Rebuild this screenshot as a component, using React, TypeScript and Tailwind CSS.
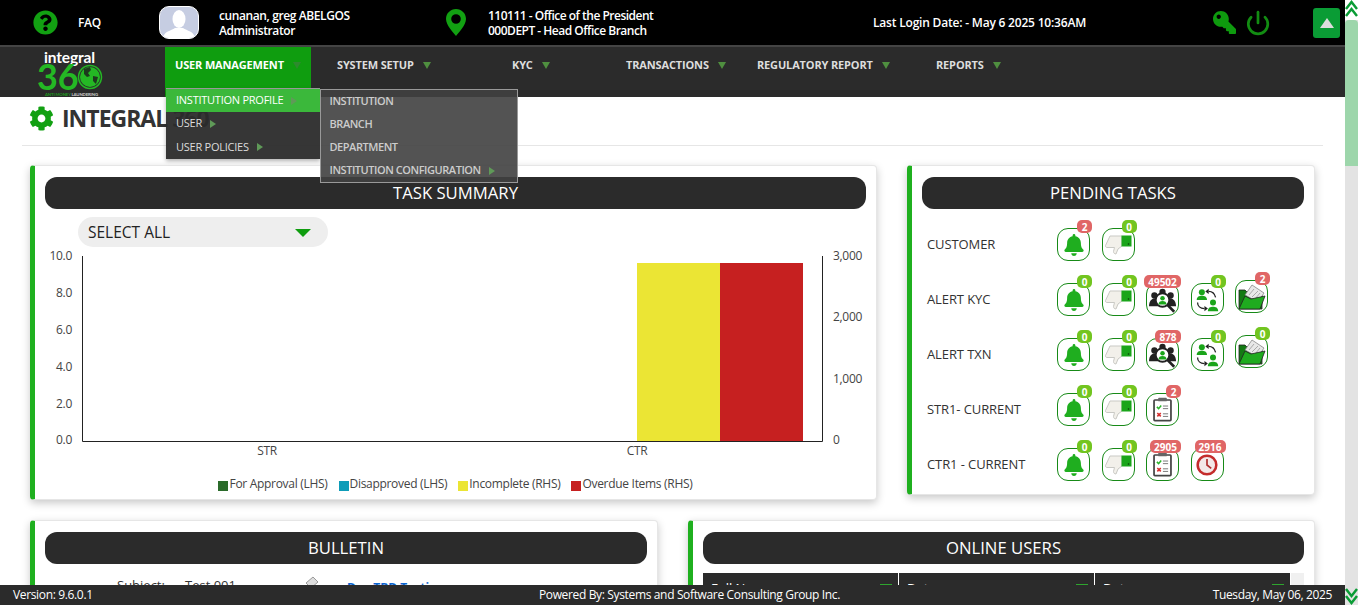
import { ReactNode } from 'react';
import { FaBell, FaCog, FaKey, FaQuestionCircle } from 'react-icons/fa';
import { Power } from 'lucide-react';

const NAV = [
  { label: 'SYSTEM SETUP', width: 'w-[175px]' },
  { label: 'KYC', width: 'w-[114px]' },
  { label: 'TRANSACTIONS', width: 'w-[131px]' },
  { label: 'REGULATORY REPORT', width: 'w-[179px]' },
  { label: 'REPORTS', width: 'w-[100px]' },
];

function Caret({ className = '' }: { className?: string }) {
  return <span className={`inline-block h-0 w-0 border-x-[4.5px] border-t-[7px] border-x-transparent ${className}`} />;
}

function SideCaret() {
  return <span className="ml-2 inline-block h-0 w-0 border-y-[4.5px] border-l-[6px] border-y-transparent border-l-[#5f9a58]" />;
}

function Logo() {
  return (
    <svg width="72" height="49" viewBox="0 0 72 49" className="font-['Lato',sans-serif]">
      <text x="9" y="15" fill="#fff" fontSize="15.500">integral</text>
      <text x="2" y="42" fill="#24b824" fontSize="36">36</text>
      <circle cx="55" cy="29" r="11.500" fill="none" stroke="#24b824" strokeWidth="1.500" />
      <circle cx="55" cy="29" r="10" fill="#24b824" />
      <path d="M49 21l6-2 1 3-3 3 2 3-3 1-3-3zM58 28l5 1-2 7-3-3z" fill="#1d3a1d" />
      <text x="10" y="47.500" fontSize="4.300" fontWeight="700">
        <tspan fill="#1f9a1f">ANTI MONEY </tspan>
        <tspan fill="#ccc">LAUNDERING</tspan>
      </text>
    </svg>
  );
}

function Pin() {
  return (
    <svg width="20" height="27" viewBox="0 0 20 27">
      <path d="M10 0C4.400 0 0 4.400 0 10c0 6.200 7.300 13.600 10 17 2.700-3.400 10-10.800 10-17C20 4.400 15.600 0 10 0zm0 14.800a4.800 4.800 0 1 1 0-9.600 4.800 4.800 0 0 1 0 9.600z" fill="#12a012" />
    </svg>
  );
}

function Avatar() {
  return (
    <div className="h-[33px] w-[40px] overflow-hidden rounded-[10px] border border-white bg-[#c6cde2]">
      <svg width="38" height="31" viewBox="0 0 38 31">
        <ellipse cx="19" cy="12" rx="6.500" ry="9" fill="#fff" />
        <path d="M3 31c1-7 8-7 12-10h8c4 3 11 3 12 10z" fill="#fff" />
      </svg>
    </div>
  );
}

function ThumbDown() {
  return (
    <svg width="27" height="20" viewBox="0 0 27 20">
      <path d="M5 1h12v10l-4 3-2 5c-1.500 0-2.500-1-2.500-2.500l1-4H2c-1 0-1.800-.8-1.500-2z" fill="#f2f0ea" stroke="#c9c9c4" strokeWidth="1" />
      <rect x="16.500" y="0.500" width="10" height="11" fill="#1aa51a" />
      <circle cx="23.500" cy="9" r="0.800" fill="#0a3a0a" />
    </svg>
  );
}

function Investigate() {
  return (
    <svg width="27" height="26" viewBox="0 0 30 28">
      <circle cx="6" cy="9" r="3.500" fill="#222" />
      <circle cx="24" cy="9" r="3.500" fill="#222" />
      <circle cx="15" cy="5" r="3.500" fill="#222" />
      <path d="M0 21c0-6 3-9 7-9h16c4 0 7 3 7 9z" fill="#222" />
      <circle cx="15" cy="14" r="7.500" fill="#fff" stroke="#222" strokeWidth="2" />
      <circle cx="15" cy="12" r="2.500" fill="#1aa51a" />
      <path d="M10.500 19c0-3 2-4 4.500-4s4.500 1 4.500 4z" fill="#1aa51a" />
      <path d="M21 20l7 7" stroke="#222" strokeWidth="3" />
    </svg>
  );
}

function Reassign() {
  return (
    <svg width="24" height="24" viewBox="0 0 28 28">
      <circle cx="8" cy="5" r="3.500" fill="#1aa51a" />
      <path d="M2 14c0-4 3-5 6-5s6 1 6 5z" fill="#1aa51a" />
      <circle cx="21" cy="17" r="3.500" fill="#1aa51a" />
      <path d="M15 27c0-4 3-5 6-5s6 1 6 5z" fill="#1aa51a" />
      <path d="M16 4c4 0 7 3 8 7" fill="none" stroke="#222" strokeWidth="1.500" />
      <path d="M16 1v6l-4-3z" fill="#222" />
      <path d="M3 17c0 4 3 7 8 7" fill="none" stroke="#222" strokeWidth="1.500" />
      <path d="M11 21v6l4-3z" fill="#222" />
    </svg>
  );
}

function OpenFolder() {
  return (
    <svg width="28" height="26" viewBox="0 0 28 26">
      <path d="M1 6h6l2 2h15v17H1z" fill="#147a14" stroke="#222" strokeWidth="0.800" />
      <path d="M7 11L14 1l12 8-6 9z" fill="#e8e8e8" stroke="#888" strokeWidth="0.800" />
      <path d="M11 11l5-6M14 13l6-6M17 15l5-6" stroke="#999" strokeWidth="0.800" />
      <path d="M1 25l6-13 6 3 14-3-5 13z" fill="#1fab1f" stroke="#222" strokeWidth="0.800" />
    </svg>
  );
}

function Checklist() {
  return (
    <svg width="19" height="25" viewBox="0 0 22 28">
      <rect x="1.200" y="3" width="19.600" height="24" rx="1" fill="#fff" stroke="#444" strokeWidth="2" />
      <rect x="6" y="0.500" width="10" height="4" rx="1" fill="#666" />
      <path d="M4.500 11l2 2 3-3.500" fill="none" stroke="#2ab52a" strokeWidth="1.800" />
      <path d="M11.500 10h6M11.500 13h6M11.500 19h6M11.500 22h6" stroke="#666" strokeWidth="1" />
      <path d="M5 18l4 4M9 18l-4 4" stroke="#d63030" strokeWidth="1.800" />
    </svg>
  );
}

function Clock() {
  return (
    <svg width="22" height="22" viewBox="0 0 26 26">
      <circle cx="13" cy="13" r="11" fill="#f3e9e9" stroke="#c42c2c" strokeWidth="3" />
      <path d="M13 6v7l5 4" fill="none" stroke="#b03030" strokeWidth="2" />
    </svg>
  );
}

function TaskIcon({ count, hot, raised, wide, children }: { count: string; hot?: boolean; raised?: boolean; wide?: string; children: ReactNode }) {
  return (
    <div className={`relative flex h-[33px] w-[33px] items-center justify-center rounded-[11px] border-[1.5px] border-[#178a17] bg-white ${raised ? 'mb-[6px]' : ''}`}>
      {children}
      <span
        className={`absolute -right-[3px] -top-[9px] flex h-[13px] items-center justify-center rounded-[5px] text-[10px] font-bold leading-none text-white ${wide ?? 'w-[15px]'} ${hot ? 'bg-[#e06666]' : 'bg-[#72c520]'}`}
      >
        {count}
      </span>
    </div>
  );
}

const bell = <FaBell className="text-[#1fae1f]" size={22} />;

function Row({ label, children }: { label: string; children: ReactNode }) {
  return (
    <div className="flex h-[55px] items-center">
      <div className="w-[130px] text-[13px] tracking-[-0.1px] text-[#333]">{label}</div>
      <div className="flex items-center gap-[11.5px]">{children}</div>
    </div>
  );
}

function Pill({ children }: { children: string }) {
  return <div className="flex h-8 items-center justify-center rounded-xl bg-[#2b2b2b] text-[16.7px] text-white">{children}</div>;
}

function Card({ className, children }: { className: string; children: ReactNode }) {
  return (
    <div className={`overflow-hidden rounded-[4px] border border-l-[5px] border-[#e6e6e6] border-l-[#1fb01f] bg-white pt-[11px] shadow-[0_3px_8px_rgba(0,0,0,0.22)] ${className}`}>
      {children}
    </div>
  );
}

function Chart() {
  const left = [['10.0', 256], ['8.0', 293], ['6.0', 330], ['4.0', 367], ['2.0', 404], ['0.0', 440]] as const;
  const right = [['3,000', 256], ['2,000', 317], ['1,000', 379], ['0', 440]] as const;
  return (
    <svg width="825" height="215" viewBox="45 250 825 215" className="font-['Open_Sans',sans-serif]" fontSize="12" fill="#444" letterSpacing="-0.3">
      {left.map(([t, y]) => (
        <text key={t} x="72" y={y + 4} textAnchor="end">{t}</text>
      ))}
      {right.map(([t, y]) => (
        <text key={t} x="833" y={y + 4}>{t}</text>
      ))}
      <rect x="637" y="263" width="83" height="178" fill="#ebe534" />
      <rect x="720" y="263" width="83" height="178" fill="#c62020" />
      <path d="M82.500 256v185.500H822.500V256" fill="none" stroke="#222" strokeWidth="1" />
      <text x="267" y="455" textAnchor="middle">STR</text>
      <text x="637" y="455" textAnchor="middle">CTR</text>
    </svg>
  );
}

const LEGEND = [
  ['For Approval (LHS)', 'bg-[#2b6b2b]'],
  ['Disapproved (LHS)', 'bg-[#0e9cb8]'],
  ['Incomplete (RHS)', 'bg-[#ebe534]'],
  ['Overdue Items (RHS)', 'bg-[#c62020]'],
];

export default function App() {
  return (
    <div className="relative flex h-[605px] w-[1358px] overflow-hidden bg-white font-['Open_Sans',sans-serif]">
      <div className="flex w-[1345px] flex-col">
        {/* Top bar */}
        <div className="flex h-[45px] items-center bg-black text-[12px] font-semibold leading-[15px] text-white">
          <FaQuestionCircle className="ml-[33px] text-[#12a012]" size={25} />
          <span className="ml-5 w-[81px] tracking-[-0.3px]">FAQ</span>
          <Avatar />
          <div className="ml-5 w-[227px] tracking-[-0.4px]">
            <div>cunanan, greg ABELGOS</div>
            <div>Administrator</div>
          </div>
          <Pin />
          <div className="ml-[22px] w-[385px] tracking-[-0.5px]">
            <div>110111 - Office of the President</div>
            <div>000DEPT - Head Office Branch</div>
          </div>
          <span className="w-[340px] tracking-[-0.2px]">Last Login Date: - May 6 2025 10:36AM</span>
          <FaKey className="-scale-x-100 text-[#0e9a0e]" size={23} />
          <Power className="ml-[9px] text-[#128c12]" size={26} strokeWidth={2.500} />
          <div className="ml-[42px] flex h-[30px] w-[27px] items-center justify-center rounded-[3px] bg-[#0a9c35]">
            <span className="h-0 w-0 border-x-[7px] border-b-[10px] border-x-transparent border-b-[#ddd]" />
          </div>
        </div>

        {/* Nav */}
        <div className="flex h-[52px] border-t-2 border-[#444] bg-[#2b2b2b] text-[11px] font-bold tracking-[-0.15px] text-[#ddd]">
          <div className="ml-[35px] w-[130px] pt-[1px]">
            <Logo />
          </div>
          <div className="relative mr-[26px] flex h-[50px] w-[146px] items-start bg-[#0f9d0f] pl-[10px] pt-[10px] text-white">
            <span>USER MANAGEMENT</span>
            <Caret className="ml-[9px] mt-[5px] border-t-[#2e8a2e]" />
            <div className="absolute left-[1px] top-[41px] z-10 w-[154px] bg-[#2b2b2b]/95 text-[11px] font-normal tracking-[-0.25px] text-[#ddd] shadow-[0_2px_4px_rgba(0,0,0,0.3)]">
              <div className="flex h-[24px] items-center border-t border-[#999] bg-[#3bb83b] pl-[10px] text-white">
                INSTITUTION PROFILE
                <SideCaret />
              </div>
              <div className="flex h-[23px] items-center pl-[10px]">USER<SideCaret /></div>
              <div className="flex h-[24px] items-center pl-[10px]">USER POLICIES<SideCaret /></div>
              <div className="absolute left-[153.500px] top-[1px] w-[198px] border border-[#999] bg-[#404040]/90 text-[11px] font-semibold tracking-[-0.45px] text-[#ccc]">
                <div className="flex h-[23px] items-center pl-[9px]">INSTITUTION</div>
                <div className="flex h-[23px] items-center pl-[9px]">BRANCH</div>
                <div className="flex h-[23px] items-center pl-[9px]">DEPARTMENT</div>
                <div className="flex h-[23px] items-center pl-[9px]">INSTITUTION CONFIGURATION<SideCaret /></div>
              </div>
            </div>
          </div>
          {NAV.map((n) => (
            <div key={n.label} className={`flex items-start pt-[10px] ${n.width}`}>
              <span>{n.label}</span>
              <Caret className="ml-[9px] mt-[5px] border-t-[#4f8f3f]" />
            </div>
          ))}
        </div>

        {/* Content */}
        <div className="min-h-0 flex-1 overflow-hidden">
          <div className="mx-[22px] flex h-[49px] items-center gap-[8px] border-b border-[#e6e6e6] pb-[6px] pl-[7px] text-[23px] font-bold tracking-[-1px] text-[#333]">
            <FaCog className="text-[#12a012]" size={25} />
            <span>INTEGRAL 360</span>
          </div>

          <div className="mt-[19px] flex items-start gap-[30px] px-[30px]">
            <Card className="h-[335px] w-[847px]">
              <div className="mx-[10px]"><Pill>TASK SUMMARY</Pill></div>
              <div className="ml-[43px] mt-2 flex h-[30px] w-[250px] items-center justify-between rounded-full bg-[#eee] pl-[10px] pr-[17px] pt-[2px] text-[15.500px] text-[#222]">
                SELECT ALL
                <span className="h-0 w-0 border-x-[8px] border-t-[8px] border-x-transparent border-t-[#0f9d0f]" />
              </div>
              <div className="ml-[10px] mt-[3px]"><Chart /></div>
              <div className="mt-[10px] flex h-[18px] items-center justify-center gap-[11px] text-[12px] tracking-[-0.3px] text-[#444]">
                {LEGEND.map(([t, c]) => (
                  <div key={t} className="flex items-center">
                    <span className={`mr-[1px] mt-[3px] h-[10px] w-[10px] ${c}`} />
                    {t}
                  </div>
                ))}
              </div>
            </Card>

            <Card className="h-[330px] w-[408px]">
              <div className="mx-[10px]"><Pill>PENDING TASKS</Pill></div>
              <div className="ml-[15px] mt-[8px]">
                <Row label="CUSTOMER">
                  <TaskIcon count="2" hot>{bell}</TaskIcon>
                  <TaskIcon count="0"><ThumbDown /></TaskIcon>
                </Row>
                <Row label="ALERT KYC">
                  <TaskIcon count="0">{bell}</TaskIcon>
                  <TaskIcon count="0"><ThumbDown /></TaskIcon>
                  <TaskIcon count="49502" hot wide="w-[37px]"><Investigate /></TaskIcon>
                  <TaskIcon count="0"><Reassign /></TaskIcon>
                  <TaskIcon count="2" hot raised><OpenFolder /></TaskIcon>
                </Row>
                <Row label="ALERT TXN">
                  <TaskIcon count="0">{bell}</TaskIcon>
                  <TaskIcon count="0"><ThumbDown /></TaskIcon>
                  <TaskIcon count="878" hot wide="w-[26px]"><Investigate /></TaskIcon>
                  <TaskIcon count="0"><Reassign /></TaskIcon>
                  <TaskIcon count="0" raised><OpenFolder /></TaskIcon>
                </Row>
                <Row label="STR1- CURRENT">
                  <TaskIcon count="0">{bell}</TaskIcon>
                  <TaskIcon count="0"><ThumbDown /></TaskIcon>
                  <TaskIcon count="2" hot><Checklist /></TaskIcon>
                </Row>
                <Row label="CTR1 - CURRENT">
                  <TaskIcon count="0">{bell}</TaskIcon>
                  <TaskIcon count="0"><ThumbDown /></TaskIcon>
                  <TaskIcon count="2905" hot wide="w-[31px]"><Checklist /></TaskIcon>
                  <TaskIcon count="2916" hot wide="w-[31px]"><Clock /></TaskIcon>
                </Row>
              </div>
            </Card>
          </div>

          <div className="mt-5 flex items-start gap-[30px] px-[30px]">
            <Card className="h-[200px] w-[628px]">
              <div className="mx-[10px]"><Pill>BULLETIN</Pill></div>
              <div className="mt-[12px] flex text-[13px] leading-[18px] text-[#333]">
                <span className="ml-[82px] w-[68px]">Subject:</span>
                <span className="w-[119px]">Test 001</span>
                <svg width="16" height="18" viewBox="0 0 16 18">
                  <path d="M2 7l7-6 5 5-7 6z" fill="#ddd" stroke="#999" />
                  <path d="M1 10h14v8H1z" fill="#3c8f3c" />
                </svg>
                <span className="ml-[27px] mt-[3px] text-[12px] font-bold text-[#0b63ce]">Doc-TBD Testing</span>
              </div>
            </Card>
            <Card className="h-[200px] w-[627px]">
              <div className="mx-[10px]"><Pill>ONLINE USERS</Pill></div>
              <div className="ml-[10px] mr-[10px] mt-[9px] flex bg-[#f0f0f0]">
                <div className="flex h-[40px] w-[588px] bg-[#2b2b2b] text-[13px] text-white">
                  {['Full Name', 'Date', 'Date'].map((h, i) => (
                    <div key={i} className="flex flex-1 justify-between border-r border-white pl-2 pr-[6px] pt-[6px]">
                      {h}
                      <span className="mt-[5px] h-[2px] w-[12px] bg-[#2ea52e]" />
                    </div>
                  ))}
                </div>
              </div>
            </Card>
          </div>
        </div>

        {/* Footer */}
        <div className="flex h-5 items-center justify-between bg-[#2b2b2b] px-[13px] text-[12px] tracking-[-0.35px] text-white">
          <span className="w-[234px]">Version: 9.6.0.1</span>
          <span>Powered By: Systems and Software Consulting Group Inc.</span>
          <span className="w-[200px] text-right">Tuesday, May 06, 2025</span>
        </div>
      </div>

      {/* Page scrollbar */}
      <div className="flex w-[13px] flex-col bg-[#e3e3e3]">
        <svg width="13" height="20" viewBox="0 0 13 20" className="shrink-0 bg-white">
          <path d="M1 9l5.500-7L12 9M1 16l5.500-7L12 16" fill="none" stroke="#0a9c35" strokeWidth="2.500" />
        </svg>
        <div className="h-[146px] w-full rounded-t-[4px] bg-[#9dd6ab]" />
        <div className="flex-1" />
        <svg width="13" height="20" viewBox="0 0 13 20" className="shrink-0">
          <path d="M1 4l5.500 7L12 4M1 11l5.500 7L12 11" fill="none" stroke="#0a9c35" strokeWidth="2.500" />
        </svg>
      </div>
    </div>
  );
}
